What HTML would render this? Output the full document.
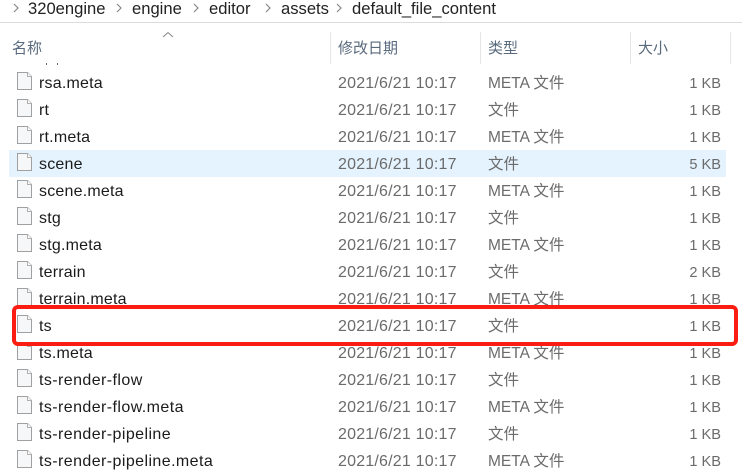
<!DOCTYPE html>
<html lang="zh">
<head>
<meta charset="utf-8">
<title>default_file_content</title>
<style>
html,body{margin:0;padding:0;background:#fff}
#p{position:relative;width:742px;height:473px;overflow:hidden;background:#fff;font-family:"Liberation Sans","Noto Sans CJK SC",sans-serif;font-size:16px}
#p div,#p span,#p svg{position:absolute}
.t{white-space:nowrap;line-height:20px}
.crumb{top:-1px;color:#222;font-size:16.6px}
.sep{top:3px}
.head{top:39px;color:#5a6a7d;font-size:15px}
.vl{top:32px;width:1px;height:32px;background:#e5e5e5}
.r{left:0;width:742px;height:27px}
.n{left:39px;top:5px;color:#1b1b1b;font-size:16px;letter-spacing:.2px}
.w{letter-spacing:.42px}
.d{left:338px;top:5px;color:#6b6b6b;font-size:16px;letter-spacing:.2px}
.y{left:488px;top:5px;color:#6b6b6b;font-size:15.5px}
.s{right:21px;top:5px;color:#6b6b6b;font-size:14.6px}
.i{left:17px;top:3px;width:15px;height:18px}
.dot{top:63px;width:1px;height:2px;background:#666}
</style>
</head>
<body>
<div id="p">
<svg width="0" height="0" style="left:0;top:0"><defs><symbol id="f" viewBox="0 0 15 18"><path d="M.5 .5H10.500L14.500 4.500V17.500H.5Z" fill="#f6f7f8" stroke="#a0a0a0"/><path d="M10.500 .5V4.500H14.500" fill="#fff" stroke="#b0b0b0"/></symbol>
<symbol id="c" viewBox="0 0 8 10"><path d="M2 1L6 5L2 9" fill="none" stroke="#888" stroke-width="1.200"/></symbol></defs></svg>

<svg class="sep" style="left:12px" width="8" height="10"><use href="#c"/></svg>
<div class="t crumb" style="left:28px">320engine</div>
<svg class="sep" style="left:115px" width="8" height="10"><use href="#c"/></svg>
<div class="t crumb" style="left:132px">engine</div>
<svg class="sep" style="left:192px" width="8" height="10"><use href="#c"/></svg>
<div class="t crumb" style="left:209px">editor</div>
<svg class="sep" style="left:264px" width="8" height="10"><use href="#c"/></svg>
<div class="t crumb" style="left:281px">assets</div>
<svg class="sep" style="left:335px" width="8" height="10"><use href="#c"/></svg>
<div class="t crumb" style="left:352px">default_file_content</div>
<div style="left:0;top:22px;width:742px;height:1px;background:#dcdcdc"></div>

<svg style="left:162px;top:31px" width="12" height="8"><path d="M1 6L6 1.500L11 6" fill="none" stroke="#888"/></svg>
<div class="t head" style="left:12px">名称</div>
<div class="t head" style="left:338px">修改日期</div>
<div class="t head" style="left:488px">类型</div>
<div class="t head" style="left:638px">大小</div>
<div class="vl" style="left:330px"></div>
<div class="vl" style="left:480px"></div>
<div class="vl" style="left:630px"></div>
<div class="vl" style="left:730px"></div>

<div class="dot" style="left:46px"></div>
<div class="dot" style="left:57px"></div>

<div style="left:9px;top:150px;width:717px;height:27px;background:#e5f3ff"></div>

<div class="r" style="top:69px"><svg class="i"><use href="#f"/></svg><span class="t n">rsa.meta</span><span class="t d">2021/6/21 10:17</span><span class="t y">META 文件</span><span class="t s">1 KB</span></div>
<div class="r" style="top:96px"><svg class="i"><use href="#f"/></svg><span class="t n">rt</span><span class="t d">2021/6/21 10:17</span><span class="t y">文件</span><span class="t s">1 KB</span></div>
<div class="r" style="top:123px"><svg class="i"><use href="#f"/></svg><span class="t n">rt.meta</span><span class="t d">2021/6/21 10:17</span><span class="t y">META 文件</span><span class="t s">1 KB</span></div>
<div class="r" style="top:150px"><svg class="i"><use href="#f"/></svg><span class="t n">scene</span><span class="t d">2021/6/21 10:17</span><span class="t y">文件</span><span class="t s">5 KB</span></div>
<div class="r" style="top:177px"><svg class="i"><use href="#f"/></svg><span class="t n">scene.meta</span><span class="t d">2021/6/21 10:17</span><span class="t y">META 文件</span><span class="t s">1 KB</span></div>
<div class="r" style="top:204px"><svg class="i"><use href="#f"/></svg><span class="t n">stg</span><span class="t d">2021/6/21 10:17</span><span class="t y">文件</span><span class="t s">1 KB</span></div>
<div class="r" style="top:231px"><svg class="i"><use href="#f"/></svg><span class="t n">stg.meta</span><span class="t d">2021/6/21 10:17</span><span class="t y">META 文件</span><span class="t s">1 KB</span></div>
<div class="r" style="top:258px"><svg class="i"><use href="#f"/></svg><span class="t n">terrain</span><span class="t d">2021/6/21 10:17</span><span class="t y">文件</span><span class="t s">2 KB</span></div>
<div class="r" style="top:285px"><svg class="i"><use href="#f"/></svg><span class="t n">terrain.meta</span><span class="t d">2021/6/21 10:17</span><span class="t y">META 文件</span><span class="t s">1 KB</span></div>
<div class="r" style="top:339px"><svg class="i"><use href="#f"/></svg><span class="t n">ts.meta</span><span class="t d">2021/6/21 10:17</span><span class="t y">META 文件</span><span class="t s">1 KB</span></div>
<div style="left:12px;top:305px;width:726px;height:41px;box-sizing:border-box;background:#fff;border:4px solid #fb1d12;border-radius:6px"></div>
<div class="r" style="top:312px"><svg class="i"><use href="#f"/></svg><span class="t n">ts</span><span class="t d">2021/6/21 10:17</span><span class="t y">文件</span><span class="t s">1 KB</span></div>
<div class="r" style="top:366px"><svg class="i"><use href="#f"/></svg><span class="t n w">ts-render-flow</span><span class="t d">2021/6/21 10:17</span><span class="t y">文件</span><span class="t s">1 KB</span></div>
<div class="r" style="top:393px"><svg class="i"><use href="#f"/></svg><span class="t n w">ts-render-flow.meta</span><span class="t d">2021/6/21 10:17</span><span class="t y">META 文件</span><span class="t s">1 KB</span></div>
<div class="r" style="top:420px"><svg class="i"><use href="#f"/></svg><span class="t n w">ts-render-pipeline</span><span class="t d">2021/6/21 10:17</span><span class="t y">文件</span><span class="t s">1 KB</span></div>
<div class="r" style="top:447px"><svg class="i"><use href="#f"/></svg><span class="t n w">ts-render-pipeline.meta</span><span class="t d">2021/6/21 10:17</span><span class="t y">META 文件</span><span class="t s">1 KB</span></div>
</div>
</body>
</html>
